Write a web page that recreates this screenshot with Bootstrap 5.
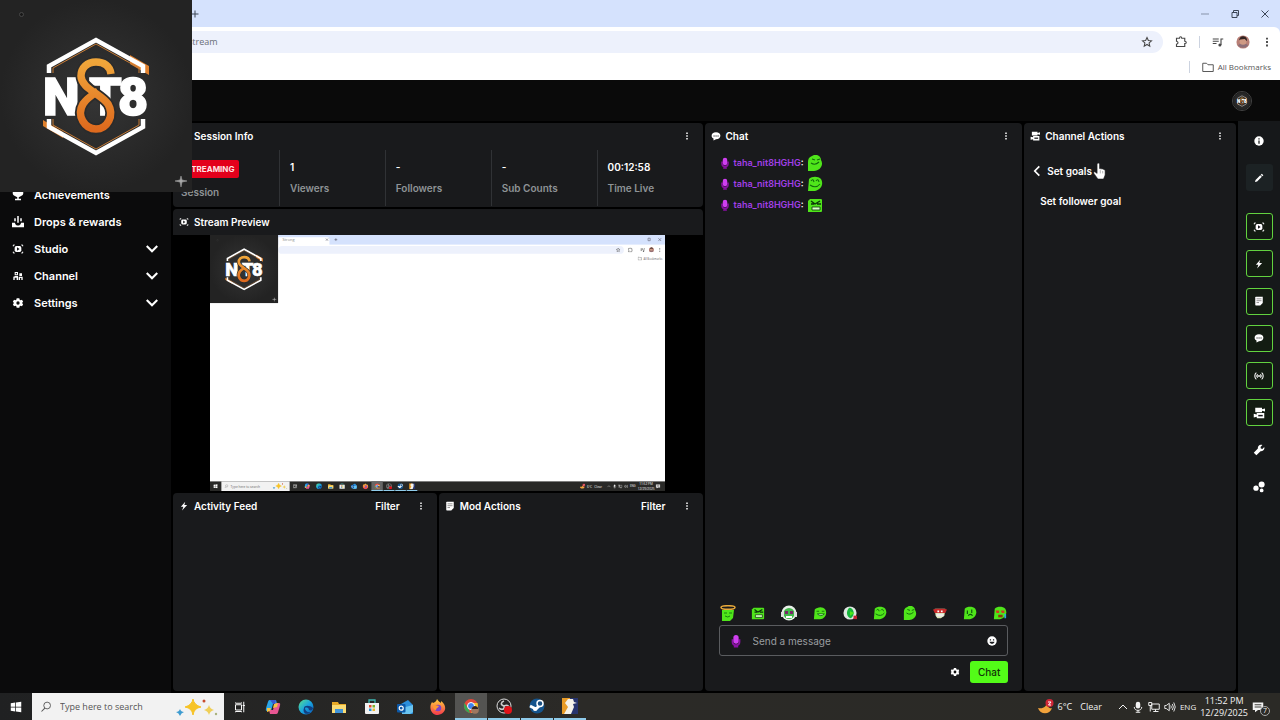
<!DOCTYPE html>
<html lang="en">
<head>
<meta charset="utf-8">
<meta name="viewport" content="width=device-width, initial-scale=1">
<title>Creator dashboard</title>
<link href="https://cdn.jsdelivr.net/npm/bootstrap@5.3.0/dist/css/bootstrap.min.css" rel="stylesheet">
<script src="https://cdn.jsdelivr.net/npm/bootstrap@5.3.0/dist/js/bootstrap.bundle.min.js"></script>
<style>
body{height:100vh;min-height:600px;background:#000;color:#fff;font:600 10px/14px Inter,"Liberation Sans",sans-serif;overflow:hidden}
button{background:none;border:0;padding:0;color:inherit;font:inherit;display:inline-flex;align-items:center;justify-content:center;flex-shrink:0}
svg{display:block;flex-shrink:0}
.i8{width:8px;height:8px}.i10{width:10px;height:10px}.i12{width:12px;height:12px}.i14{width:14px;height:14px}.i16{width:16px;height:16px}.i18{width:18px;height:18px}
.win{font-family:"Open Sans","Noto Sans",sans-serif;font-weight:400}
/* browser chrome */
.titlebar{height:27px;background:#d5e2fd;color:#3c4657;padding:0 10px 0 190px}
.chrome{background:#fff;color:#474747;border-radius:0 6px 0 0}
.chrome-wrap{background:#d5e2fd}
.toolbar{height:31px;padding:4px 8px 5px 0}
.omnibox{background:#edf1fc;border-radius:0 11px 11px 0;height:22px;padding:0 10px 0 188px;font-size:9px;color:#6b6f78}
.omnibox svg{color:#474747}
.bookmarks{height:22px;padding:0 9px 4px 0;font-size:8px;color:#555}
.rule{width:1px;height:12px;background:#ccd3e0}
/* app */
.apphead{height:41px;background:#0a0a0a;padding-right:28px}
.appbody{flex:1 1 0;min-height:0}
.avatar{width:20px;height:20px;border-radius:50%;overflow:hidden;border:1px solid #444}
.side{width:171px;background:#0b0b0c;padding:60px 12px 0 12px;font-size:11px}
.side a{height:27px;color:#fff;text-decoration:none;gap:10px}
.board{display:grid;grid-template-columns:5fr 3fr 2fr;gap:2px;padding:2px;min-width:0}
.leftcol{display:grid;grid-template-rows:84px minmax(0,1fr) 198px;gap:2px;min-height:0;min-width:0}
.panel{background:#191a1c;border-radius:4px;min-width:0;min-height:0}
.phead{height:26px;padding:0 12px 0 6px;gap:5px}
.phead h2{font-size:10px;line-height:14px;font-weight:600;margin:0}
.filter{margin:0 12px 0 auto}
.stat{padding:10px 0 0 10px;border-left:1px solid #303235;height:56px;margin-top:1px}
.stat:first-child{border:0;padding-left:8px}
.lbl{color:#8e9396;font-weight:600;margin-top:7px}
.live{background:#e3001b;border-radius:2px;font-size:8px;line-height:12px;padding:3px 5px;width:fit-content;color:#ffe4e6;font-weight:700}
.preview{background:#000;min-height:0}
.preview svg{height:100%;max-width:100%;width:auto;aspect-ratio:16/9}
.feeds{display:grid;grid-template-columns:1fr 1fr;gap:2px}
.msgs{padding:5px 14px;gap:3px}
.msg{height:18px;gap:3px;font-size:9px}
.nick{color:#a13fe6}
.emotes{margin-bottom:4px;padding:0 15px}
.compose{margin:0 14px;height:31px;border:1px solid #5a5c5f;border-radius:3px;padding:0 10px 0 9px;gap:8px}
.compose input{background:none;border:0;outline:0;color:#fff;min-width:0;font:400 10px/14px Inter,sans-serif}
.compose input::placeholder{color:#9a9da0;opacity:1}
.sendrow{padding:5px 14px 8px;gap:10px}
.send{background:#53fc18;color:#123208;border-radius:3px;width:38px;height:22px;font-weight:500}
.rail{width:42px;background:#16181a;padding:6px 0 0}
.rail button{width:27px;height:27px;border-radius:3px}
.rail .on{border:1px solid #62d33f;background:#131c12}
.railset{height:288px}
.railtop{height:86px;gap:10px}
.edit{background:#1c2224}
.webcam{position:absolute;left:0;top:0;width:192px;height:192px;z-index:5}
.hand{position:absolute;left:61px;top:-1px;width:13px;height:16px}
.goals{padding:15px 8px 0 8px}
/* desktop */
.taskbar{height:27px;background:linear-gradient(90deg,#202122,#2b2a27 45%,#2b2a26);color:#f2f2f2;font-size:9px;line-height:12px}
.search{width:192px;background:#f2f2f2;padding:0 2px 0 8px;color:#555}
.search input{border:0;background:none;outline:0;width:100px;font-size:9px;padding:0;color:#444}
.search input::placeholder{color:#555;opacity:1}
.tb{width:32px;height:27px}
.tb.run{border-bottom:2px solid #8fcbea}
.tb.act{background:#545452}
.lang{font-size:8px}
.cnt{position:absolute;right:-6px;bottom:-3px;width:10px;height:10px;border:1px solid #aaa;border-radius:50%;background:#2b2a26;font-size:7px;line-height:8px}
</style>
</head>
<body class="d-flex flex-column position-relative">
<svg width="0" height="0" class="position-absolute" aria-hidden="true">
<defs>
<linearGradient id="gold" x1="0" y1="0" x2="0" y2="1"><stop offset="0" stop-color="#f0a63a"/><stop offset="1" stop-color="#de6a1e"/></linearGradient>
<radialGradient id="slate"><stop offset="0" stop-color="#353535"/><stop offset="1" stop-color="#232323"/></radialGradient>
<linearGradient id="ff" x1="0" y1="0" x2="0" y2="1"><stop offset="0" stop-color="#ffd43b"/><stop offset="1" stop-color="#f4364c"/></linearGradient>
<linearGradient id="edgeg" x1="0" y1="0" x2="1" y2="1"><stop offset="0" stop-color="#5be08b"/><stop offset=".5" stop-color="#1aa5e0"/><stop offset="1" stop-color="#0b57b8"/></linearGradient>
</defs>
<symbol id="brand" viewBox="0 0 192 192">
<rect width="192" height="192" fill="url(#slate)"/>
<path d="M130 55l19 11v9l-19-11zM43 120l20 12v6l-20-12z" fill="#e0802c"/>
<path d="M49 73V66L96 40l47 26v7M49 119v8l47 26 47-26v-8" fill="none" stroke="#fff" stroke-width="4.500"/>
<path d="M53 73v-5L96 44l43 24v5M53 119v6l43 24 43-24v-6" fill="none" stroke="#c77b35" stroke-width="1"/>
<g fill="#fff" stroke="#fff" stroke-width="1.500" font-family="Roboto, sans-serif" font-weight="900"><text x="43" y="115" font-size="52">N</text><text x="89" y="115" font-size="52">T</text><text x="118" y="115" font-size="52">8</text></g>
<path d="M111 74C110 66 104 62 96 62c-9 0-15 6-15 14 0 12 20 18 27 28 7 12-1 25-12 25s-20-13-13-25c3-5 9-9 15-13" fill="none" stroke="#2b2b2b" stroke-width="11"/>
<path d="M111 74C110 66 104 62 96 62c-9 0-15 6-15 14 0 12 20 18 27 28 7 12-1 25-12 25s-20-13-13-25c3-5 9-9 15-13" fill="none" stroke="url(#gold)" stroke-width="7.500"/>
<path d="M181 176l1 4 5 1-5 1-1 5-1-5-5-1 5-1z" fill="#aaa" stroke="#999" stroke-width=".6"/><circle cx="21.500" cy="14.500" r="2" fill="#181818" stroke="#484848"/>
</symbol>
<symbol id="dots" viewBox="0 0 16 16"><path d="M6.500 1h3v3h-3zM6.500 6.500h3v3h-3zM6.500 12h3v3h-3z" fill="currentColor"/></symbol>
<symbol id="trophy" viewBox="0 0 16 16"><path d="M4 1h8v2h3v3c0 2-2 3-3.500 3.500L9 11v2h3v2H4v-2h3v-2L4.500 9.500C3 9 1 8 1 6V3h3z" fill="currentColor"/></symbol>
<symbol id="drops" viewBox="0 0 16 16"><path d="M0 9h4c0 5 8 5 8 0h4v6H0zM7 0h2v9H7zM3 3h2v4H3zM11 3h2v4h-2z" fill="currentColor"/></symbol>
<symbol id="studio" viewBox="-1 -1 18 18"><path d="M1 4V2h2M13 2h2v2M15 12v2h-2M3 14H1v-2" fill="none" stroke="currentColor" stroke-width="1.500"/><rect x="3" y="3.500" width="10" height="9" rx="2.500" fill="currentColor"/><path d="M6.500 5.500l4 2.500-4 2.500z" fill="#191a1c"/></symbol>
<symbol id="people" viewBox="-1 -1 18 18"><path d="M3 2h5v5H3zM1 14V9l3-1h4v6zM10 4h4v4h-4zM9 9h6v5H9z" fill="currentColor"/><path d="M4.500 3.500h2v2h-2zM3 10.500h3V14H3zM11 11h2v3h-2z" fill="#191a1c"/></symbol>
<symbol id="gear" viewBox="-1 -1 18 18"><path d="M6 1h4l.5 2 1.500.8 2-.6 1.700 3L14 8l1.700 1.800-1.700 3-2-.6-1.500.8L10 15H6l-.5-2-1.500-.8-2 .6-1.700-3L2 8 .3 6.200l1.700-3 2 .6L5.500 3z" fill="currentColor"/><circle cx="8" cy="8" r="2.500" fill="#111"/></symbol>
<symbol id="chev" viewBox="0 0 12 12"><path d="M1.500 3.500L6 8l4.500-4.500" fill="none" stroke="currentColor" stroke-width="1.800"/></symbol>
<symbol id="bubble" viewBox="0 0 16 16"><path d="M8 2c4.500 0 7 2.400 7 5.500S12.500 13 8 13l-4 2v-3C2 11 1 9.500 1 7.500 1 4.400 3.500 2 8 2z" fill="currentColor"/><path d="M4 7h1.800v1.800H4zM7.200 7H9v1.800H7.200zM10.400 7h1.800v1.800h-1.800z" fill="#191a1c"/></symbol>
<symbol id="bolt" viewBox="0 0 16 16"><path d="M10 1L3 9h4l-2 6 8-8.500H8.500z" fill="currentColor"/></symbol>
<symbol id="note" viewBox="0 0 16 16"><path d="M3 1h11v10l-4 4H3a1 1 0 01-1-1V2a1 1 0 011-1z" fill="currentColor"/><path d="M4 4.500h8M4 7.500h8M4 10.500h4" stroke="#555" stroke-width="1"/></symbol>
<symbol id="cams" viewBox="0 0 16 16"><path d="M3 1h9v2l4-1v4l-4-1v2H3zM5 8h10v7H5v-2l-4 1V9l4 1z" fill="currentColor"/><path d="M7 10.500h6v2H7z" fill="#191a1c"/></symbol>
<symbol id="radio" viewBox="-1 -1 18 18"><path d="M4 3C1 5 1 11 4 13M12 3c3 2 3 8 0 10M6 5.500C4.500 7 4.500 9 6 10.500M10 5.500c1.500 1.500 1.500 3.500 0 5" fill="none" stroke="currentColor" stroke-width="1.600"/><circle cx="8" cy="8" r="1.400" fill="currentColor"/></symbol>
<symbol id="info" viewBox="0 0 16 16"><circle cx="8" cy="8" r="7.500" fill="currentColor"/><path d="M7 3.500h2v2H7zM7 7h2v5.500H7z" fill="#191a1c"/></symbol>
<symbol id="pencil" viewBox="0 0 16 16"><path d="M12.500 1L15 3.500l-1.700 1.700-2.500-2.500zM10 3.500L12.500 6 5 13.500 1.500 14.500 2.500 11z" fill="currentColor"/></symbol>
<symbol id="wrench" viewBox="0 0 16 16"><path d="M10.500 1c1 0 1.500.2 2 .4L10 4l.5 2 2 .5L15 4c1 3-1 6-5 5.500L4.500 15 1 11.500 6.500 6C6 3.500 8 1 10.500 1z" fill="currentColor"/></symbol>
<symbol id="nodes" viewBox="0 0 16 16"><circle cx="11.500" cy="4.500" r="4" fill="currentColor"/><circle cx="4" cy="9.500" r="3.500" fill="currentColor"/><circle cx="11.500" cy="12.500" r="2.500" fill="currentColor"/></symbol>
<symbol id="mic" viewBox="0 0 12 16"><path d="M2 6v3c0 5 8 5 8 0V6M6 12v3M3.500 14.500h5" fill="none" stroke="#8b0fa5" stroke-width="2"/><rect x="3" y="1" width="6" height="10" rx="3" fill="#cf3ff0"/></symbol>
<symbol id="smile" viewBox="0 0 16 16"><circle cx="8" cy="8" r="7.500" fill="currentColor"/><path d="M4.500 5h2v2h-2zM9.500 5h2v2h-2zM4 9h8c-1 4.500-7 4.500-8 0z" fill="#191a1c"/></symbol>
<symbol id="e1" viewBox="1 1 16 16"><path d="M3 6h12l-1 8-3 3H3z" fill="#4fe51a"/><ellipse cx="9" cy="3.500" rx="7" ry="1.800" fill="none" stroke="#e8a93a" stroke-width="1.500"/><path d="M5 9h3M10 9h3M6 12q3 2 5 0" stroke="#16820d" fill="none"/></symbol>
<symbol id="e2" viewBox="1 1 16 16"><path d="M4 3h11a1.500 1.500 0 011 1v11a1 1 0 01-1 1H2V5z" fill="#4fe51a"/><path d="M5 5l4 3 5-3M5 8h3M11 8h4" stroke="#0b330a" stroke-width="1.400" fill="none"/><path d="M6 11h8v3H6z" fill="#d9ffc8" stroke="#0b330a" stroke-width=".8"/></symbol>
<symbol id="e3" viewBox="1 1 16 16"><circle cx="9" cy="9" r="7.500" fill="#e8efe8"/><circle cx="9" cy="9.500" r="5.500" fill="#42b94a"/><path d="M5 7h3v3H5zM10 7h3v3h-3z" fill="#7a2668"/><path d="M1 8h3v5H1zM14 8h3v5h-3z" fill="#ddd"/><path d="M6 13h6" stroke="#fff" stroke-width="2"/></symbol>
<symbol id="e4" viewBox="1 1 16 16"><path d="M3 5c3-3 9-4 12 0 3 5-1 11-6 11H2z" fill="#4fe51a"/><path d="M5 7h3M11 7h3M6 10q4 4 8 0z" stroke="#116a0d" stroke-width="1" fill="#d8ffd0"/></symbol>
<symbol id="e5" viewBox="1 1 16 16"><circle cx="9" cy="9" r="7.500" fill="#dfe8e2"/><path d="M8 3c6 0 7 9 2 12-5-1-6-8-2-12z" fill="#17b63b"/><path d="M9 7l5 2-5 3z" fill="#4fe51a"/><path d="M13 12h4v4h-4z" fill="#c32133"/></symbol>
<symbol id="e6" viewBox="1 1 16 16"><path d="M3 4c3-3 9-3 12 0 3 5 0 11-6 12H2z" fill="#4fe51a"/><path d="M5 6q2-3 3 1M10 6q2-3 3 1M4 10q6 4 10-1" stroke="#116a0d" stroke-width="1.100" fill="none"/></symbol>
<symbol id="e7" viewBox="1 1 16 16"><path d="M6 2c4-3 9 0 9 4 3 5-1 11-7 11H2V8c0-3 1-5 4-6z" fill="#4fe51a"/><path d="M6 5l3 1M11 6l3-1M5 9q4 3 8-1" stroke="#116a0d" stroke-width="1.100" fill="none"/></symbol>
<symbol id="e8" viewBox="1 1 16 16"><path d="M3 4h12l-1 8-4 3H6l-2-3z" fill="#dce8b8"/><path d="M1 5l4-1h8l4 1-2 4H3z" fill="#c92a2a"/><path d="M5 10h8v3H5z" fill="#eee"/><path d="M6 6h2v2H6zM10 6h2v2h-2z" fill="#fff"/></symbol>
<symbol id="e9" viewBox="1 1 16 16"><path d="M3 4c3-3 9-3 12 0 3 5 0 11-6 12H2z" fill="#4fe51a"/><path d="M6 6v4M11 5v4M7 12q2-3 5 0" stroke="#0b560b" stroke-width="1.300" fill="none"/></symbol>
<symbol id="e10" viewBox="1 1 16 16"><path d="M3 4c3-3 9-3 12 0 3 5 0 11-6 12H2z" fill="#4fe51a"/><path d="M4 6h4v3H5zM10 6h4v3h-3z" fill="#d13b20"/><path d="M7 11h5v3H7z" fill="#8e3510"/><path d="M14 10h2v5h-2z" fill="#2da7d8"/></symbol>
<!-- taskbar icons -->
<symbol id="wlogo" viewBox="0 0 16 16"><path d="M1 3l6-1v5.500H1zM8 2l7-1v6.500H8zM1 8.500h6V14l-6-1zM8 8.500h7V15l-7-1z" fill="#fff"/></symbol>
<symbol id="glass" viewBox="0 0 16 16"><circle cx="9.500" cy="6" r="4.500" fill="none" stroke="currentColor" stroke-width="1.200"/><path d="M6.500 9.500L2 14" stroke="currentColor" stroke-width="1.400"/></symbol>
<symbol id="spark" viewBox="0 0 42 18"><path d="M17 1q1 6 8 8-7 1-8 8-1-7-8-8 7-2 8-8z" fill="#f7c326" stroke="#f7c326"/><path d="M33 7q1 4 5 5-4 1-5 5-1-4-5-5 4-1 5-5z" fill="#efcf58"/><path d="M4 11q1 3 4 3-3 1-4 4-1-3-4-4 3 0 4-3z" fill="#3d9bd0"/><circle cx="28" cy="3" r="1.500" fill="#c94b2c"/><circle cx="40" cy="16" r="1.200" fill="#a9b27d"/></symbol>
<symbol id="tview" viewBox="0 0 16 16"><path d="M2 5h8v7H2zM2 2v1h8V2M2 15v-1h8v1M13 1v14M11.500 6h3" fill="none" stroke="#fff" stroke-width="1.300"/></symbol>
<symbol id="copilot" viewBox="0 0 16 16"><path d="M5 1h6l1 4H8L6 12H2c-2 0-1-3 0-6 1-3 1-5 3-5z" fill="#2aa5e8"/><path d="M11 15H5l-1-4h4l2-7h4c2 0 1 3 0 6-1 3-1 5-3 5z" fill="#e85693"/><path d="M2 9h4l-1 3-3 1zM9 5l4-1-1 4-4 1z" fill="#f2c244"/><path d="M5 1h6l-1 4H8z" fill="#3558cf"/></symbol>
<symbol id="edge" viewBox="0 0 16 16"><circle cx="8" cy="8" r="7.500" fill="url(#edgeg)"/><path d="M6 9c0-3 6-3 9 0 0 2-2 3-4 2 0-2-2-3-4-2 0 3 3 5 6 4-4 4-9 1-7-4z" fill="#123f80"/></symbol>
<symbol id="folder" viewBox="0 0 16 16"><path d="M1 3h6l1 2h7v9H1z" fill="#e7a927"/><path d="M1 6h14v8H1z" fill="#f9db75"/><path d="M4 10h8v4H4z" fill="#4194d8"/></symbol>
<symbol id="store" viewBox="0 0 16 16"><path d="M5 4V1h6v3" fill="none" stroke="#3fb7b2" stroke-width="1.300"/><path d="M1 4h14v10q0 1-1 1H2q-1 0-1-1z" fill="#f1f1f1"/><path d="M5 6h2.500v2.500H5z" fill="#e24a2c"/><path d="M8.500 6H11v2.500H8.500z" fill="#7ab52a"/><path d="M5 9.500h2.500V12H5z" fill="#2894d6"/><path d="M8.500 9.500H11V12H8.500z" fill="#ecb52c"/></symbol>
<symbol id="outlook" viewBox="0 0 16 16"><path d="M4 5l7-4 5 5v8q0 1-1 1H5z" fill="#2b8fdc"/><path d="M5 9l11-3v7l-3 2H5z" fill="#69c4f1"/><rect y="5" width="8.500" height="8.500" rx="1" fill="#0c59a8"/><circle cx="4.200" cy="9.200" r="2" fill="none" stroke="#fff" stroke-width="1.200"/></symbol>
<symbol id="fox" viewBox="0 0 16 16"><path d="M1 5l1-2 1 1c2-1 3-1 4-4 1 2 3 3 4 4V2c6 4 6 12-3 14C2 16-1 10 1 5z" fill="url(#ff)"/><circle cx="8" cy="9" r="3.300" fill="#7c45c8"/><path d="M3 7c2-2 4 0 6 0-1 2-3 2-3 4-2 0-3-2-3-4z" fill="#ff9930"/></symbol>
<symbol id="gchrome" viewBox="0 0 16 16"><circle cx="8" cy="8" r="7" fill="#e4483b"/><path d="M1.500 5L6 12l1 3C2 14 0 9 1.500 5z" fill="#36a852"/><path d="M8 5h6.500C16 10 13 14 8 15l3-6z" fill="#f4c52c"/><circle cx="8" cy="8" r="3.500" fill="#3e82ee" stroke="#fff"/><circle cx="12" cy="12" r="3.800" fill="#9e7862"/><path d="M9 10q3-4 6 0v1H9z" fill="#302320"/></symbol>
<symbol id="obs" viewBox="0 0 16 16"><circle cx="8" cy="8" r="7" fill="#252525" stroke="#ddd"/><path d="M8 8c-4-1-3-4 0-5M8 8c4-2 6 1 4 3M8 8c1 4-3 4-5 2" fill="none" stroke="#ccc" stroke-width="1.600"/><circle cx="12" cy="12" r="4" fill="#e21219"/></symbol>
<symbol id="steam" viewBox="0 0 16 16"><circle cx="8" cy="8" r="7.500" fill="#15548c"/><path d="M1 8l6 3 4-4" stroke="#fff" stroke-width="3" fill="none"/><circle cx="11" cy="5.500" r="3" fill="#184f83" stroke="#fff" stroke-width="1.500"/><circle cx="6" cy="11" r="2" fill="#fff"/></symbol>
<symbol id="cs" viewBox="0 0 16 16"><path d="M0 0h8v16H0z" fill="#e89b27"/><path d="M8 0h8v16H8z" fill="#27346e"/><path d="M6 1h5l1 3 3 1-4 1 1 3-3 7H2l4-7-3-4z" fill="#f5f2ea"/></symbol>
<symbol id="moon" viewBox="0 0 16 16"><path d="M9 2c0 6-4 8-9 7 2 7 12 7 14 0-2 1-6-1-5-7z" fill="#f2a23b"/><circle cx="11.500" cy="4" r="4" fill="#cf2637"/><path d="M10 3h3L10.500 6H13" fill="none" stroke="#fff" stroke-width="1"/></symbol>
<symbol id="tmic" viewBox="0 0 16 16"><rect x="5" y="1" width="6" height="9" rx="3" fill="currentColor"/><path d="M3 8c0 6 10 6 10 0M8 12v3M5 15h6" fill="none" stroke="currentColor" stroke-width="1.300"/></symbol>
<symbol id="net" viewBox="0 0 16 16"><path d="M5 4h10v7H5zM10 11v3M7 14h7M1 2h4v4H1zM3 6v8" fill="none" stroke="currentColor" stroke-width="1.300"/></symbol>
<symbol id="vol" viewBox="0 0 16 16"><path d="M1 6h2l4-3v10L3 10H1zM9 6q1.500 2 0 4M11 4q3 4 0 8M13 2q4 6 0 12" fill="none" stroke="currentColor" stroke-width="1.200"/></symbol>
<symbol id="notif" viewBox="0 0 16 16"><path d="M1 2h14v10H8l-4 3v-3H1z" fill="currentColor"/><path d="M3.500 5h9M3.500 8h9" stroke="#2b2a26" stroke-width="1.200"/></symbol>
<symbol id="star" viewBox="0 0 16 16"><path d="M8 2l1.800 4 4.200.4-3.200 2.900.9 4.200L8 11.300l-3.700 2.200.9-4.200L2 6.400 6.200 6z" fill="none" stroke="currentColor" stroke-width="1.400"/></symbol>
<symbol id="puzzle" viewBox="0 0 16 16"><path d="M2 3h4q0-2 1.500-2T9 3h4v4q2 0 2 1.500T13 10v4H2v-3q2-.5 2-2T2 7z" fill="none" stroke="currentColor" stroke-width="1.500"/></symbol>
<symbol id="tune" viewBox="0 0 16 16"><path d="M1 4h8M1 7h8M1 10h5M12 12V4h3" fill="none" stroke="currentColor" stroke-width="1.500"/><circle cx="10.500" cy="12" r="2" fill="currentColor"/></symbol>
<symbol id="me" viewBox="0 0 16 16"><circle cx="8" cy="8" r="7.500" fill="#b87f76"/><path d="M2 12q6 5 12 0-2-3-6-3t-6 3z" fill="#8d6f78"/><circle cx="8" cy="7" r="4" fill="#cf9a84"/><path d="M3.500 6q1-5 5-4.500Q13 2 12.500 7L10 4.500 5 5z" fill="#332321"/></symbol>
<symbol id="fold" viewBox="0 0 16 16"><path d="M1 3h5l2 2h7v9H1z" fill="none" stroke="currentColor" stroke-width="1.300"/></symbol>
</svg>

<header class="win flex-shrink-0">
<div class="titlebar d-flex align-items-center">
<button aria-label="New tab"><svg class="i10" viewBox="0 0 10 10"><path d="M5 1.500v7M1.500 5h7" stroke="currentColor"/></svg></button>
<div class="ms-auto d-flex" style="gap:20px">
<button aria-label="Minimize"><svg class="i10" viewBox="0 0 10 10"><path d="M1 5h8" stroke="#8793a9"/></svg></button>
<button aria-label="Restore"><svg class="i10" viewBox="0 0 10 10"><path d="M2 3.500h5v5H2zM3.500 3V1.500h5v5H7" fill="none" stroke="currentColor"/></svg></button>
<button aria-label="Close"><svg class="i10" viewBox="0 0 10 10"><path d="M1.500 1.500l7 7M8.500 1.500l-7 7" stroke="currentColor"/></svg></button>
</div></div>
<div class="chrome-wrap"><div class="chrome">
<div class="toolbar d-flex align-items-center">
<div class="omnibox flex-grow-1 d-flex align-items-center justify-content-between"><span>stream</span><button aria-label="Bookmark"><svg class="i12"><use href="#star"/></svg></button></div>
<button class="ms-2 me-1 ps-1" aria-label="Extensions"><svg class="i12"><use href="#puzzle"/></svg></button><span class="rule ms-2 me-2"></span>
<button class="ms-1" aria-label="Media"><svg class="i12"><use href="#tune"/></svg></button>
<button class="ms-2 ps-1 me-2" aria-label="Profile"><svg class="i14"><use href="#me"/></svg></button>
<button class="ms-1" aria-label="Menu"><svg class="i10"><use href="#dots"/></svg></button>
</div>
<div class="bookmarks d-flex align-items-center justify-content-end"><span class="rule me-2"></span><button class="ms-1"><svg class="i12 me-1"><use href="#fold"/></svg>All Bookmarks</button></div>
</div></div>
</header>

<div class="apphead flex-shrink-0 d-flex align-items-center justify-content-end"><button class="avatar" aria-label="Account"><svg class="i18"><use href="#brand"/></svg></button></div>

<div class="appbody d-flex">
<nav class="side flex-shrink-0 d-flex flex-column" aria-label="Dashboard">
<a href="#" class="d-flex align-items-center"><svg class="i12"><use href="#trophy"/></svg>Achievements</a>
<a href="#" class="d-flex align-items-center"><svg class="i12"><use href="#drops"/></svg>Drops &amp; rewards</a>
<a href="#" class="d-flex align-items-center"><svg class="i12"><use href="#studio"/></svg>Studio<svg class="i14 ms-auto"><use href="#chev"/></svg></a>
<a href="#" class="d-flex align-items-center"><svg class="i12"><use href="#people"/></svg>Channel<svg class="i14 ms-auto"><use href="#chev"/></svg></a>
<a href="#" class="d-flex align-items-center"><svg class="i12"><use href="#gear"/></svg>Settings<svg class="i14 ms-auto"><use href="#chev"/></svg></a>
</nav>

<main class="board flex-grow-1">
<div class="leftcol">
<section class="panel">
<div class="phead d-flex align-items-center"><svg class="i10"><use href="#info"/></svg><h2>Session Info</h2><button class="ms-auto" aria-label="Options"><svg class="i8"><use href="#dots"/></svg></button></div>
<div class="row row-cols-5 g-0">
<div class="stat"><div class="live">STREAMING</div><div class="lbl">Session</div></div>
<div class="stat"><div>1</div><div class="lbl">Viewers</div></div>
<div class="stat"><div>-</div><div class="lbl">Followers</div></div>
<div class="stat"><div>-</div><div class="lbl">Sub Counts</div></div>
<div class="stat"><div>00:12:58</div><div class="lbl">Time Live</div></div>
</div>
</section>
<section class="panel d-flex flex-column">
<div class="phead d-flex align-items-center flex-shrink-0"><svg class="i10"><use href="#studio"/></svg><h2>Stream Preview</h2></div>
<div class="preview flex-grow-1 d-flex justify-content-center">
<svg viewBox="0 0 1280 720" role="img" aria-label="Live picture" font-family="Open Sans, sans-serif" font-weight="400">
<rect width="1280" height="720" fill="#fff"/><rect width="1280" height="27" fill="#d5e2fd"/><path d="M192 6h138q6 0 6 6v18H192z" fill="#fff"/>
<rect x="192" y="31" width="972" height="22" rx="11" fill="#edf1fc"/>
<text x="204" y="18" font-size="11" fill="#888">Strong</text>
<path d="M326 10l6 6m0-6l-6 6M354 9v8m-4-4h8M1232 9h6v7h-6zM1261 9l8 8m0-8l-8 8" stroke="#556" fill="none" stroke-width="1.500"/>
<g color="#444"><use href="#star" x="1141" y="35" width="14" height="14"/><use href="#puzzle" x="1175" y="35" width="14" height="14"/><use href="#tune" x="1210" y="35" width="14" height="14"/><use href="#me" x="1234" y="34" width="15" height="15"/><use href="#dots" x="1259" y="36" width="12" height="12"/><use href="#fold" x="1203" y="60" width="12" height="12"/></g>
<text x="1219" y="70" font-size="8" fill="#666">All Bookmarks</text>
<rect y="693" width="1280" height="27" fill="#292927"/><rect x="32" y="693" width="192" height="27" fill="#f2f2f2"/><rect x="454" y="693" width="32" height="27" fill="#666"/>
<path d="M454 719h32M488 719h31M521 719h30M553 719h30" stroke="#8fcbea" stroke-width="3"/>
<text x="58" y="711" font-size="9" fill="#666">Type here to search</text>
<g color="#666"><use href="#glass" x="40" y="701" width="12" height="12"/></g>
<g color="#eee"><use href="#wlogo" x="9" y="700" width="13" height="13"/><use href="#spark" x="176" y="697" width="42" height="18"/><use href="#tview" x="233" y="700" width="13" height="13"/><use href="#copilot" x="265" y="698" width="17" height="17"/><use href="#edge" x="298" y="698" width="17" height="17"/><use href="#folder" x="331" y="698" width="17" height="17"/><use href="#store" x="363" y="698" width="17" height="17"/><use href="#outlook" x="396" y="698" width="17" height="17"/><use href="#fox" x="429" y="698" width="17" height="17"/><use href="#gchrome" x="462" y="698" width="17" height="17"/><use href="#obs" x="495" y="698" width="17" height="17"/><use href="#steam" x="527" y="698" width="17" height="17"/><use href="#cs" x="560" y="698" width="17" height="17"/><use href="#moon" x="1040" y="699" width="16" height="16"/><use href="#tmic" x="1132" y="701" width="12" height="12"/><use href="#net" x="1148" y="701" width="12" height="12"/><use href="#vol" x="1164" y="701" width="12" height="12"/><use href="#notif" x="1253" y="700" width="14" height="14"/></g>
<g fill="#eee" font-size="9"><text x="1060" y="711">6°C</text><text x="1081" y="711">Clear</text><text x="1181" y="710" font-size="8">ENG</text><text x="1207" y="704">11:52 PM</text><text x="1203" y="716">12/29/2025</text></g>
<path d="M1118 709l4-4 4 4" fill="none" stroke="#eee"/><use href="#brand" width="192" height="192"/>
</svg>
</div>
</section>
<div class="feeds">
<section class="panel"><div class="phead d-flex align-items-center"><svg class="i10"><use href="#bolt"/></svg><h2>Activity Feed</h2><button class="filter">Filter</button><button aria-label="Options"><svg class="i8"><use href="#dots"/></svg></button></div></section>
<section class="panel"><div class="phead d-flex align-items-center"><svg class="i10"><use href="#note"/></svg><h2>Mod Actions</h2><button class="filter">Filter</button><button aria-label="Options"><svg class="i8"><use href="#dots"/></svg></button></div></section>
</div>
</div>

<section class="panel d-flex flex-column">
<div class="phead d-flex align-items-center"><svg class="i10"><use href="#bubble"/></svg><h2>Chat</h2><button class="ms-auto" aria-label="Options"><svg class="i8"><use href="#dots"/></svg></button></div>
<div class="msgs d-flex flex-column flex-grow-1">
<div class="msg d-flex align-items-center"><svg class="i12"><use href="#mic"/></svg><span><span class="nick">taha_nit8HGHG</span>:</span><svg class="i16"><use href="#e7"/></svg></div>
<div class="msg d-flex align-items-center"><svg class="i12"><use href="#mic"/></svg><span><span class="nick">taha_nit8HGHG</span>:</span><svg class="i16"><use href="#e6"/></svg></div>
<div class="msg d-flex align-items-center"><svg class="i12"><use href="#mic"/></svg><span><span class="nick">taha_nit8HGHG</span>:</span><svg class="i16"><use href="#e2"/></svg></div>
</div>
<div class="emotes d-flex justify-content-between">
<button aria-label="Halo"><svg class="i16"><use href="#e1"/></svg></button><button aria-label="Angry"><svg class="i14"><use href="#e2"/></svg></button><button aria-label="Astronaut"><svg class="i16"><use href="#e3"/></svg></button><button aria-label="Grin"><svg class="i14"><use href="#e4"/></svg></button><button aria-label="Headphones"><svg class="i14"><use href="#e5"/></svg></button><button aria-label="Happy"><svg class="i14"><use href="#e6"/></svg></button><button aria-label="Smile"><svg class="i14"><use href="#e7"/></svg></button><button aria-label="Hype"><svg class="i14"><use href="#e8"/></svg></button><button aria-label="Worried"><svg class="i14"><use href="#e9"/></svg></button><button aria-label="Love"><svg class="i14"><use href="#e10"/></svg></button>
</div>
<div class="compose d-flex align-items-center"><svg class="i14"><use href="#mic"/></svg><input class="flex-grow-1" type="text" placeholder="Send a message" aria-label="Send a message"><button aria-label="Emotes"><svg class="i10"><use href="#smile"/></svg></button></div>
<div class="sendrow d-flex justify-content-end align-items-center"><button aria-label="Chat settings"><svg class="i10"><use href="#gear"/></svg></button><button class="send">Chat</button></div>
</section>

<section class="panel">
<div class="phead d-flex align-items-center"><svg class="i10"><use href="#cams"/></svg><h2>Channel Actions</h2><button class="ms-auto" aria-label="Options"><svg class="i8"><use href="#dots"/></svg></button></div>
<div class="goals d-flex flex-column align-items-start">
<div class="position-relative d-flex"><button><svg class="me-1" width="11" height="12" viewBox="0 0 12 12"><path d="M8 1L3 6l5 5" fill="none" stroke="currentColor" stroke-width="1.800"/></svg>Set goals</button>
<svg class="hand" viewBox="0 0 16 20"><path d="M5 10V2q0-2 1.500-2T8 2v5q5 0 7 2v6l-2 5H6L1 13q-1-2 1-2l3 2z" fill="#fff" stroke="#222" stroke-width=".7"/><path d="M9 9v4M12 10v3" stroke="#777" stroke-width=".7"/></svg></div>
<button class="mt-3 ms-1 ps-1">Set follower goal</button>
</div>
</section>
</main>

<aside class="rail flex-shrink-0">
<div class="railtop d-flex flex-column align-items-center"><button aria-label="Info"><svg class="i10"><use href="#info"/></svg></button><button class="edit" aria-label="Edit layout"><svg class="i10"><use href="#pencil"/></svg></button></div>
<div class="railset d-flex flex-column align-items-center justify-content-between">
<button class="on" aria-label="Preview"><svg class="i12"><use href="#studio"/></svg></button><button class="on" aria-label="Activity"><svg class="i10"><use href="#bolt"/></svg></button><button class="on" aria-label="Mod actions"><svg class="i10"><use href="#note"/></svg></button><button class="on" aria-label="Chat"><svg class="i10"><use href="#bubble"/></svg></button><button class="on" aria-label="Session"><svg class="i12"><use href="#radio"/></svg></button><button class="on" aria-label="Channel actions"><svg class="i12"><use href="#cams"/></svg></button><button aria-label="Tools"><svg class="i12"><use href="#wrench"/></svg></button><button aria-label="Integrations"><svg class="i12"><use href="#nodes"/></svg></button>
</div>
</aside>
</div>

<footer class="taskbar win d-flex align-items-center flex-shrink-0">
<button class="tb" aria-label="Start"><svg class="i12"><use href="#wlogo"/></svg></button>
<label class="search d-flex align-items-center h-100"><svg class="i12 me-2"><use href="#glass"/></svg><input type="text" placeholder="Type here to search" aria-label="Type here to search"><svg class="ms-auto me-1" width="42" height="18"><use href="#spark"/></svg></label>
<div class="d-flex" style="gap:1px">
<button class="tb" aria-label="Task view"><svg class="i12"><use href="#tview"/></svg></button><button class="tb" aria-label="Copilot"><svg class="i16"><use href="#copilot"/></svg></button><button class="tb" aria-label="Edge"><svg class="i16"><use href="#edge"/></svg></button><button class="tb" aria-label="Files"><svg class="i16"><use href="#folder"/></svg></button><button class="tb" aria-label="Store"><svg class="i16"><use href="#store"/></svg></button><button class="tb" aria-label="Outlook"><svg class="i16"><use href="#outlook"/></svg></button><button class="tb" aria-label="Firefox"><svg class="i16"><use href="#fox"/></svg></button><button class="tb act run" aria-label="Chrome"><svg class="i16"><use href="#gchrome"/></svg></button><button class="tb run" aria-label="OBS"><svg class="i16"><use href="#obs"/></svg></button><button class="tb run" aria-label="Steam"><svg class="i16"><use href="#steam"/></svg></button><button class="tb run" aria-label="Game"><svg class="i16"><use href="#cs"/></svg></button>
</div>
<div class="ms-auto d-flex align-items-center pe-3">
<button class="me-3"><svg class="i16 me-1"><use href="#moon"/></svg><span class="me-2">6°C</span><span>Clear</span></button>
<div class="d-flex align-items-center gap-1 me-1"><svg width="10" height="10" viewBox="0 0 10 10"><path d="M1 7l4-4 4 4" fill="none" stroke="currentColor"/></svg><svg class="i12"><use href="#tmic"/></svg><svg class="i12"><use href="#net"/></svg><svg class="i12"><use href="#vol"/></svg><span class="lang">ENG</span></div>
<div class="text-center me-1">11:52 PM<br>12/29/2025</div>
<button class="position-relative" aria-label="Notifications"><svg class="i12"><use href="#notif"/></svg><span class="cnt">7</span></button>
</div>
</footer>
<svg class="webcam" role="img" aria-label="Channel logo"><use href="#brand"/></svg>
</body>
</html>
